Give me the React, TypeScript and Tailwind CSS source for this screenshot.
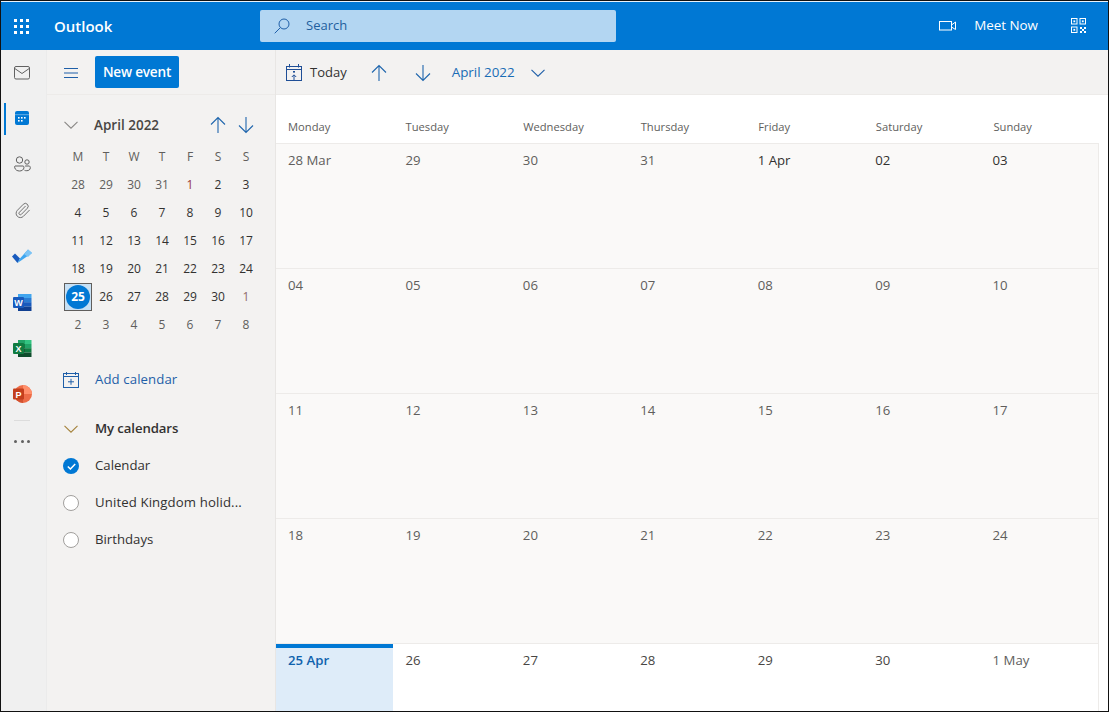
import React from "react";
import { Paperclip } from "lucide-react";

const weekdays = ["Monday", "Tuesday", "Wednesday", "Thursday", "Friday", "Saturday", "Sunday"];
const miniHead = ["M", "T", "W", "T", "F", "S", "S"];
const mini: string[][] = [
  ["28", "29", "30", "31", "1", "2", "3"],
  ["4", "5", "6", "7", "8", "9", "10"],
  ["11", "12", "13", "14", "15", "16", "17"],
  ["18", "19", "20", "21", "22", "23", "24"],
  ["25", "26", "27", "28", "29", "30", "1"],
  ["2", "3", "4", "5", "6", "7", "8"],
];
const weeks: string[][] = [
  ["28 Mar", "29", "30", "31", "1 Apr", "02", "03"],
  ["04", "05", "06", "07", "08", "09", "10"],
  ["11", "12", "13", "14", "15", "16", "17"],
  ["18", "19", "20", "21", "22", "23", "24"],
];
const last = ["25 Apr", "26", "27", "28", "29", "30", "1 May"];

const Arrow = ({ down, color = "#1f66ad" }: { down?: boolean; color?: string }) => (
  <svg width="16" height="18" viewBox="0 0 16 18" fill="none" stroke={color} strokeWidth="1.1" style={down ? { transform: "rotate(180deg)" } : undefined}>
    <path d="M8 17V1.5M1 8.5l7-7 7 7" />
  </svg>
);
const Chevron = ({ color = "#1f5fa8", w = 14 }: { color?: string; w?: number }) => (
  <svg width={w} height="8" viewBox="0 0 14 8" fill="none" stroke={color} strokeWidth="1.1">
    <path d="M.5.8 7 7.2 13.5.8" />
  </svg>
);

const MailIcon = () => (
  <svg width="16" height="14" viewBox="0 0 16 14" fill="none" stroke="#616161" strokeWidth="1">
    <rect x=".5" y=".5" width="15" height="12.5" rx="1.5" />
    <path d="M.8 2.5 8 7.5l7.2-5" />
  </svg>
);
const CalIcon = () => (
  <svg width="14" height="14" viewBox="0 0 14 14">
    <rect width="14" height="14" rx="2" fill="#0078d4" />
    <rect y="3.5" width="14" height=".6" fill="#9fcdf0" />
    <g fill="#fff">
      <rect x="3" y="6" width="1.6" height="1.6" />
      <rect x="6" y="6" width="1.6" height="1.6" />
      <rect x="9" y="6" width="1.6" height="1.6" />
      <rect x="3" y="9" width="1.6" height="1.6" />
      <rect x="6" y="9" width="1.6" height="1.6" />
    </g>
  </svg>
);
const PeopleIcon = () => (
  <svg width="17" height="16" viewBox="0 0 17 16" fill="none" stroke="#616161" strokeWidth="1">
    <circle cx="5.5" cy="4" r="3.2" />
    <circle cx="13" cy="6" r="2.2" />
    <path d="M1 10h8a1.2 1.2 0 0 1 1 1.2C10 14 7.5 15 5.5 15S1 14 .6 11.2A1.2 1.2 0 0 1 1 10Z" />
    <path d="M10.5 14.3c.7.3 1.5.5 2.3.4 2 0 3.5-1 3.5-3 0-.9-.5-1.7-1.2-1.7h-4" />
  </svg>
);
const TodoIcon = () => (
  <svg width="20" height="16" viewBox="0 0 20 16">
    <path d="M0 8.5 3 5.5 8 10.5 5.5 15Z" fill="#185abd" />
    <path d="M5.5 15 8 10.5 16 1.5 20 5Z" fill="#3ea6f0" />
    <path d="M12 6 16 1.5 20 5 16 9Z" fill="#7cc4f5" />
  </svg>
);
const WordIcon = () => (
  <svg width="19" height="17" viewBox="0 0 19 17">
    <rect x="5" y="0" width="13.5" height="4" fill="#41a5ee" />
    <rect x="5" y="4" width="13.5" height="4.2" fill="#2b7cd3" />
    <rect x="5" y="8.2" width="13.5" height="4.4" fill="#185abd" />
    <rect x="5" y="12.6" width="13.5" height="4.4" fill="#103f91" />
    <rect x="0" y="3" width="11" height="11" rx="1" fill="#185abd" />
    <text x="5.5" y="12" textAnchor="middle" fontFamily="Liberation Sans, sans-serif" fontSize="9" fontWeight="700" fill="#fff">W</text>
  </svg>
);
const ExcelIcon = () => (
  <svg width="19" height="17" viewBox="0 0 19 17">
    <rect x="5" y="0" width="7" height="4" fill="#21a366" />
    <rect x="12" y="0" width="6.5" height="4" fill="#33c481" />
    <rect x="5" y="4" width="7" height="4.2" fill="#107c41" />
    <rect x="12" y="4" width="6.5" height="4.2" fill="#21a366" />
    <rect x="5" y="8.2" width="7" height="4.4" fill="#185c37" />
    <rect x="12" y="8.2" width="6.5" height="4.4" fill="#107c41" />
    <rect x="5" y="12.6" width="13.5" height="4.4" fill="#0f4d2d" />
    <rect x="0" y="3" width="11" height="11" rx="1" fill="#107c41" />
    <text x="5.5" y="12" textAnchor="middle" fontFamily="Liberation Sans, sans-serif" fontSize="9" fontWeight="700" fill="#fff">X</text>
  </svg>
);
const PptIcon = () => (
  <svg width="19" height="18" viewBox="0 0 19 18">
    <circle cx="10" cy="9" r="9" fill="#ed6c47" />
    <path d="M10 0a9 9 0 0 1 9 9h-9Z" fill="#ff8f6b" />
    <path d="M10 18a9 9 0 0 1-9-9h9Z" fill="#d35230" />
    <rect x="0" y="3.5" width="11" height="11" rx="1" fill="#c43e1c" />
    <text x="5.5" y="12.5" textAnchor="middle" fontFamily="Liberation Sans, sans-serif" fontSize="9" fontWeight="700" fill="#fff">P</text>
  </svg>
);
const TodayIcon = () => (
  <svg width="16" height="17" viewBox="0 0 16 17" fill="none" stroke="#1f4e96" strokeWidth="1">
    <rect x=".5" y="2.5" width="15" height="14" />
    <path d="M.5 5.5h15M3.5 0v3.5M12.5 0v3.5M8 16v-5M5.8 13 8 10.8 10.2 13" />
    <rect x="7" y="7" width="2" height="1.6" fill="#1f4e96" stroke="none" />
  </svg>
);
const AddCalIcon = () => (
  <svg width="16" height="16" viewBox="0 0 16 16" fill="none" stroke="#1f5fa8" strokeWidth="1">
    <rect x=".5" y="1.5" width="15" height="14" />
    <path d="M.5 4.5h15M3.5 0v3M12.5 0v3M8 6.8v6M5 9.8h6" />
  </svg>
);
const Waffle = () => (
  <svg width="15" height="15" viewBox="0 0 15 15" fill="#fff">
    {[0, 6, 12].flatMap((y) => [0, 6, 12].map((x) => <rect key={`${x}-${y}`} x={x} y={y} width="3" height="3" />))}
  </svg>
);
const SearchIcon = () => (
  <svg width="16" height="16" viewBox="0 0 16 16" fill="none" stroke="#1f5fa8" strokeWidth="1">
    <circle cx="10" cy="6" r="5" />
    <path d="M6.4 9.6.7 15.3" />
  </svg>
);
const VideoIcon = () => (
  <svg width="17" height="10" viewBox="0 0 17 10" fill="none" stroke="#fff" strokeWidth="1">
    <rect x=".5" y=".5" width="12" height="8.5" />
    <path d="M12.5 4 16.5 1v7.5L12.5 6" />
  </svg>
);
const QrIcon = () => (
  <svg width="15" height="15" viewBox="0 0 15 15" fill="none" stroke="#fff" strokeWidth="1">
    <rect x=".5" y=".5" width="5.5" height="5.5" />
    <rect x="9" y=".5" width="5.5" height="5.5" />
    <rect x=".5" y="9" width="5.5" height="5.5" />
    <g fill="#fff" stroke="none">
      <rect x="2.4" y="2.4" width="1.8" height="1.8" />
      <rect x="10.9" y="2.4" width="1.8" height="1.8" />
      <rect x="2.4" y="10.9" width="1.8" height="1.8" />
      <rect x="9" y="9" width="2" height="2" />
      <rect x="13" y="9" width="2" height="2" />
      <rect x="11" y="11" width="2" height="2" />
      <rect x="9" y="13" width="2" height="2" />
      <rect x="13" y="13" width="2" height="2" />
    </g>
  </svg>
);

function miniColor(r: number, c: number) {
  if (r === 0 && c === 4) return "text-[#9a3b3b]";
  if (r === 4 && c === 6) return "text-[#8f6b6b]";
  if (r === 0 && c < 4) return "text-[#605e5c]";
  if (r === 5) return "text-[#605e5c]";
  return "text-[#323130]";
}

const RailItem = ({ children, active }: { children: React.ReactNode; active?: boolean }) => (
  <div className="h-[46px] flex items-center justify-center pr-[3px] relative">
    {active && <span className="absolute left-[3px] top-[8px] h-[32px] w-[2px] bg-[#0078d4]" />}
    {children}
  </div>
);

export default function App() {
  return (
    <div className="w-[1109px] h-[712px] border border-[#111] flex flex-col overflow-hidden bg-white text-[#323130] font-['Open_Sans',sans-serif] text-[13.2px]">
      <div className="h-px bg-[#e8f2fb] shrink-0" />
      <header className="h-[48px] shrink-0 bg-[#0078d4] flex items-center text-white">
        <div className="w-[45px] pl-[13px] flex items-center"><Waffle /></div>
        <div className="w-[214px] pl-[8px] pt-px text-[15px] font-semibold">Outlook</div>
        <div className="w-[356px] h-[32px] rounded-[2px] bg-[#b3d6f2] flex items-center pl-[14px] text-[13px] text-[#1f5f9e]">
          <SearchIcon />
          <span className="ml-[16px]">Search</span>
        </div>
        <div className="ml-auto flex items-center">
          <VideoIcon />
          <span className="ml-[18px] -mt-px text-[13.4px]">Meet Now</span>
          <span className="ml-[33px] mr-[22px] flex"><QrIcon /></span>
        </div>
      </header>
      <div className="flex flex-1 min-h-0">
        <nav className="w-[46px] shrink-0 bg-[#f0f0f0] border-r border-[#ebebeb] flex flex-col">
          <div className="h-[45px] flex items-center justify-center pr-[3px] pt-px"><MailIcon /></div>
          <RailItem active><CalIcon /></RailItem>
          <RailItem><PeopleIcon /></RailItem>
          <RailItem><Paperclip size={17} strokeWidth={1.25} color="#616161" /></RailItem>
          <RailItem><TodoIcon /></RailItem>
          <RailItem><WordIcon /></RailItem>
          <RailItem><ExcelIcon /></RailItem>
          <RailItem><PptIcon /></RailItem>
          <div className="ml-[13px] w-[16px] mt-[3px] h-px bg-[#dcdcdc]" />
          <div className="mt-[19px] w-[16px] ml-[13px] flex justify-between">
            <span className="w-[3px] h-[3px] rounded-full bg-[#616161]" />
            <span className="w-[3px] h-[3px] rounded-full bg-[#616161]" />
            <span className="w-[3px] h-[3px] rounded-full bg-[#616161]" />
          </div>
        </nav>
        <aside className="w-[229px] shrink-0 bg-[#f3f2f1] border-r border-[#e8e6e4] flex flex-col">
          <div className="h-[45px] shrink-0 border-b border-[#edebe9] flex items-center">
            <svg className="ml-[17px] mt-[1px]" width="14" height="10" viewBox="0 0 14 10" fill="none" stroke="#1f5fa8" strokeWidth="1">
              <path d="M0 .5h14M0 5h14M0 9.5h14" />
            </svg>
            <button className="ml-[17px] w-[84px] h-[32px] rounded-[2px] bg-[#0078d4] text-white text-[13.6px] font-semibold tracking-[-0.2px]">New event</button>
          </div>
          <div className="flex items-center h-[30px] mt-[15px] pl-[17px]">
            <Chevron color="#8a8886" />
            <span className="ml-[16px] font-semibold text-[13.5px] text-[#484644] w-[116px]">April 2022</span>
            <Arrow />
            <span className="w-[12px]" />
            <Arrow down />
          </div>
          <div className="ml-[17px] mt-[3px] w-[196px] grid grid-cols-7 text-[12px] text-center">
            {miniHead.map((d, i) => (
              <div key={i} className="h-[28px] flex items-center justify-center text-[#605e5c]">{d}</div>
            ))}
            {mini.flat().map((d, i) => {
              const r = Math.floor(i / 7);
              const c = i % 7;
              if (r === 4 && c === 0)
                return (
                  <div key={i} className="h-[28px] flex items-center justify-center bg-[#c7e0f4] border border-[#605e5c]">
                    <span className="w-[24px] h-[24px] rounded-full bg-[#0078d4] text-white font-bold flex items-center justify-center">25</span>
                  </div>
                );
              return (
                <div key={i} className={`h-[28px] flex items-center justify-center ${miniColor(r, c)}`}>{d}</div>
              );
            })}
          </div>
          <div className="flex items-center h-[20px] mt-[31px] pl-[16px] text-[#1f5fa8]">
            <AddCalIcon />
            <span className="ml-[16px] tracking-[0.1px]">Add calendar</span>
          </div>
          <div className="flex items-center h-[20px] mt-[29px] pl-[17px]">
            <Chevron color="#a5833c" />
            <span className="ml-[17px] font-semibold tracking-[-0.1px]">My calendars</span>
          </div>
          <div className="flex items-center h-[20px] mt-[17px] pl-[16px]">
            <span className="w-[16px] h-[16px] rounded-full bg-[#0078d4] flex items-center justify-center">
              <svg width="9" height="7" viewBox="0 0 9 7" fill="none" stroke="#fff" strokeWidth="1.5"><path d="M.8 3.5 3.4 6 8.2 1" /></svg>
            </span>
            <span className="ml-[16px]">Calendar</span>
          </div>
          <div className="flex items-center h-[20px] mt-[17px] pl-[16px]">
            <span className="w-[16px] h-[16px] rounded-full bg-white border border-[#a19f9d]" />
            <span className="ml-[16px] whitespace-nowrap tracking-[0.12px]">United Kingdom holid...</span>
          </div>
          <div className="flex items-center h-[20px] mt-[17px] pl-[16px]">
            <span className="w-[16px] h-[16px] rounded-full bg-white border border-[#a19f9d]" />
            <span className="ml-[16px]">Birthdays</span>
          </div>
        </aside>
        <main className="flex-1 min-w-0 flex flex-col">
          <div className="h-[45px] shrink-0 bg-[#f3f2f1] border-b border-[#edebe9] flex items-center pt-px">
            <span className="ml-[10px] flex"><TodayIcon /></span>
            <span className="ml-[8px] text-[13px]">Today</span>
            <span className="ml-[24px] flex"><Arrow /></span>
            <span className="ml-[28px] flex"><Arrow down /></span>
            <span className="ml-[21px] text-[13.4px] text-[#1a6cb5]">April 2022</span>
            <span className="ml-[16px] flex"><Chevron /></span>
          </div>
          <div className="h-[49px] shrink-0 border-b border-[#edebe9] grid grid-cols-7 w-[823px]">
            {weekdays.map((d) => (
              <div key={d} className="pl-[12px] pt-[23px] text-[11.2px] leading-[18px] text-[#605e5c]">{d}</div>
            ))}
          </div>
          <div className="flex-1 min-h-0 flex flex-col w-[823px] border-r border-[#edebe9]">
            {weeks.map((w, i) => (
              <div key={i} className="h-[125px] shrink-0 grid grid-cols-7 bg-[#faf9f8] border-b border-[#edebe9]">
                {w.map((d, j) => (
                  <div key={j} className={`pl-[12px] pt-[6px] leading-[20px] ${(i === 0 && j < 4) ? "text-[#605e5c]" : i === 0 ? "text-[#323130]" : "text-[#605e5c]"}`}>{d}</div>
                ))}
              </div>
            ))}
            <div className="flex-1 min-h-0 grid grid-cols-7">
              {last.map((d, j) => (
                <div key={j} className={j === 0 ? "bg-[#deecf9] border-t-4 border-[#0078d4] pl-[12px] pt-[2px] leading-[20px] font-semibold text-[#0f62ad]" : `pl-[12px] pt-[6px] leading-[20px] ${j === 6 ? "text-[#605e5c]" : "text-[#484644]"}`}>{d}</div>
              ))}
            </div>
          </div>
        </main>
      </div>
    </div>
  );
}
